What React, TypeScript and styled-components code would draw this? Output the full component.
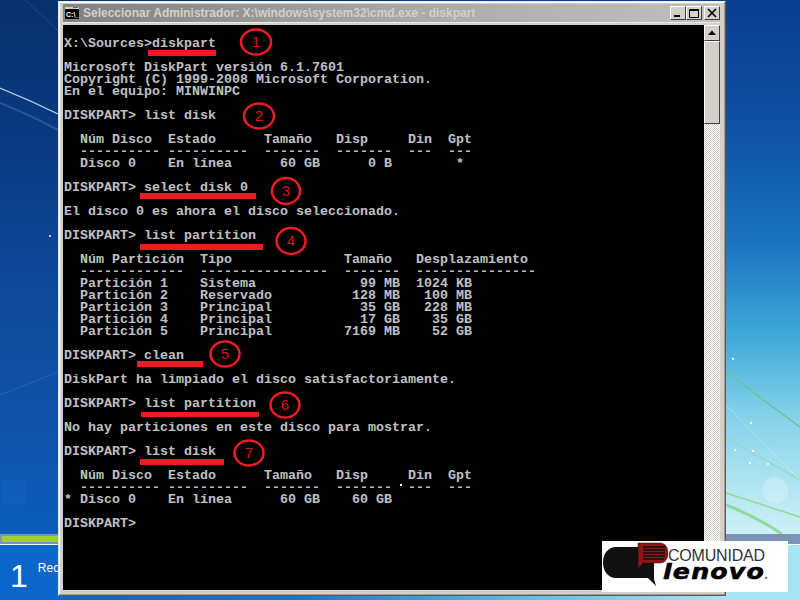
import React from "react";
import styled, { createGlobalStyle } from "styled-components";

const Global = createGlobalStyle`
  html, body { margin: 0; padding: 0; background: #0a5cb8; }
`;

const Desktop = styled.div`
  position: relative;
  width: 800px;
  height: 600px;
  overflow: hidden;
  display: flex;
  flex-direction: column;
  padding-top: 534px;
  box-sizing: border-box;
  background:
    linear-gradient(180deg, #07306c 0, #0a3a80 130px, #0f4a9c 300px, #0f54ae 450px, #0b5fbe 540px, #0a66c8 600px) left top / 400px 100% no-repeat,
    linear-gradient(180deg, #0a3f90 0, #0d4da2 110px, #1a72c0 240px, #3aa6d8 330px, #7fd0e8 410px, #b4e6f2 490px, #cdf0f7 534px, #a8e4f4 600px) right top / 400px 100% no-repeat;
`;

const Decor = styled.svg`
  position: absolute;
  inset: 0;
  width: 800px;
  height: 600px;
`;

const ProgressTrack = styled.div`
  position: relative;
  height: 11px;
  flex: none;
  box-sizing: border-box;
  background: #7a94b8;
  padding: 2px 0 2px 2px;
  border-bottom: 1px solid #ffffff;
`;

const ProgressFill = styled.div`
  width: 100px;
  height: 100%;
  background: #9bcf3a;
`;

const StatusRow = styled.div`
  position: relative;
  flex: 1;
  display: flex;
  align-items: flex-start;
  gap: 10px;
  padding: 13px 0 0 10px;
  color: #ffffff;
  font-family: "Liberation Sans", sans-serif;
  background: linear-gradient(90deg, #0a66c8 0, #0a66c8 80px, #1478cc 300px, #5cbce2 520px, #a8e4f4 726px);
`;

const StepNumber = styled.span`
  font-size: 32px;
  line-height: 36px;
`;

const StepLabel = styled.span`
  font-size: 12px;
  line-height: 16px;
  padding-top: 2px;
`;

const Win = styled.div`
  position: absolute;
  left: 58px;
  top: 1px;
  width: 668px;
  height: 595px;
  box-sizing: border-box;
  display: flex;
  flex-direction: column;
  background: #d4d0c8;
  padding: 2px 5px 5px 4px;
  border-top: 1px solid #efece4;
  border-left: 1px solid #e8e5dd;
  border-right: 1px solid #5a5a5a;
  border-bottom: 1px solid #5a5a5a;
  box-shadow: inset -1px -1px 0 #a09c94, inset 1px 1px 0 #ffffff;
`;

const TitleBar = styled.div`
  flex: none;
  height: 18px;
  display: flex;
  align-items: center;
  gap: 3px;
  padding: 0 0 0 1px;
  background: linear-gradient(90deg, #808080 0, #a8a8a8 50%, #c0c0c0 100%);
  border-bottom: 1px solid #efece4;
`;

const AppIcon = styled.svg`
  width: 16px;
  height: 14px;
  flex: none;
`;

const TitleText = styled.span`
  flex: 1;
  font-family: "Liberation Sans", sans-serif;
  font-weight: 700;
  font-size: 12px;
  line-height: 16px;
  color: #d4d0c8;
  white-space: nowrap;
`;

const CaptionButton = styled.div<{ $gap?: boolean }>`
  width: 16px;
  height: 14px;
  flex: none;
  margin-left: ${(p) => (p.$gap ? "2px" : "0")};
  box-sizing: border-box;
  background: #d4d0c8;
  border-top: 1px solid #ffffff;
  border-left: 1px solid #ffffff;
  border-right: 1px solid #404040;
  border-bottom: 1px solid #404040;
  display: flex;
  align-items: center;
  justify-content: center;
`;

const Glyph = styled.svg`
  width: 12px;
  height: 10px;
`;

const CaptionGroup = styled.div`
  display: flex;
  flex: none;
`;

const Body = styled.div`
  flex: 1;
  min-height: 0;
  display: flex;
  margin-top: 2px;
`;

const ConsoleArea = styled.div`
  position: relative;
  flex: 1;
  background: #000000;
  overflow: hidden;
  padding: 1px 0 0 1px;
`;

const ConsoleLine = styled.div`
  width: fit-content;
  height: 12px;
  font-family: "Liberation Mono", monospace;
  font-size: 13.333px;
  font-weight: 700;
  line-height: 12px;
  color: #c0c0c0;
  white-space: pre;
`;

const Marks = styled.svg`
  position: absolute;
  left: 0;
  top: 0;
  width: 641px;
  height: 566px;
`;

const MarkNumber = styled.text`
  font-family: "Liberation Sans", sans-serif;
  font-size: 15px;
  fill: #d8141c;
  text-anchor: middle;
`;

const ScrollBar = styled.div`
  flex: none;
  width: 16px;
  display: flex;
  flex-direction: column;
  background: repeating-conic-gradient(#d4d0c8 0 25%, #ffffff 0 50%) 0 0 / 2px 2px;
`;

const ScrollButton = styled.div`
  flex: none;
  height: 16px;
  box-sizing: border-box;
  background: #d4d0c8;
  border-top: 1px solid #ffffff;
  border-left: 1px solid #ffffff;
  border-right: 1px solid #404040;
  border-bottom: 1px solid #404040;
  display: flex;
  align-items: center;
  justify-content: center;
`;

const Thumb = styled.div`
  flex: none;
  height: 83px;
  box-sizing: border-box;
  background: #d4d0c8;
  border-top: 1px solid #ffffff;
  border-left: 1px solid #ffffff;
  border-right: 1px solid #404040;
  border-bottom: 1px solid #404040;
`;

const Track = styled.div`
  flex: 1;
`;

const Logo = styled.div`
  position: absolute;
  left: 602px;
  top: 541px;
  width: 186px;
  height: 51px;
  background: #ffffff;
  display: flex;
`;

const LogoMark = styled.svg`
  width: 66px;
  height: 51px;
  flex: none;
`;

const LogoWords = styled.div`
  display: flex;
  flex-direction: column;
  align-items: flex-start;
  padding-top: 7px;
`;

const Comunidad = styled.span`
  font-family: "Liberation Sans", sans-serif;
  font-size: 16px;
  line-height: 15px;
  letter-spacing: -0.2px;
  color: #333333;
`;

const Lenovo = styled.span`
  font-family: "DejaVu Sans", sans-serif;
  font-size: 21px;
  font-weight: 700;
  font-style: italic;
  line-height: 18px;
  letter-spacing: 1px;
  color: #000000;
  margin-left: -5px;
  -webkit-text-stroke: 0.6px #000;
  transform: scaleX(1.2);
  transform-origin: left center;
`;

const LogoDot = styled.span`
  font-size: 12px;
  letter-spacing: 0;
  color: #888888;
  -webkit-text-stroke: 0;
  margin-left: -1px;
`;

const consoleLines = `
X:\\Sources>diskpart

Microsoft DiskPart versión 6.1.7601
Copyright (C) 1999-2008 Microsoft Corporation.
En el equipo: MINWINPC

DISKPART> list disk

  Núm Disco  Estado      Tamaño   Disp     Din  Gpt
  ---------- ----------  -------  -------  ---  ---
  Disco 0    En línea      60 GB      0 B        *

DISKPART> select disk 0

El disco 0 es ahora el disco seleccionado.

DISKPART> list partition

  Núm Partición  Tipo              Tamaño   Desplazamiento
  -------------  ----------------  -------  ---------------
  Partición 1    Sistema             99 MB  1024 KB
  Partición 2    Reservado          128 MB   100 MB
  Partición 3    Principal           35 GB   228 MB
  Partición 4    Principal           17 GB    35 GB
  Partición 5    Principal         7169 MB    52 GB

DISKPART> clean

DiskPart ha limpiado el disco satisfactoriamente.

DISKPART> list partition

No hay particiones en este disco para mostrar.

DISKPART> list disk

  Núm Disco  Estado      Tamaño   Disp     Din  Gpt
  ---------- ----------  -------  -------  ---  ---
* Disco 0    En línea      60 GB    60 GB

DISKPART> `.split("\n");

// Coordinates in console space: page x - 63, page y - 24
const ox = 63;
const oy = 24;
const underlines = [
  { x: 148, y: 49, w: 68, h: 6 },
  { x: 140, y: 192, w: 116, h: 6 },
  { x: 140, y: 243, w: 123, h: 6 },
  { x: 137, y: 360, w: 66, h: 6 },
  { x: 141, y: 411, w: 118, h: 5 },
  { x: 140, y: 458, w: 84, h: 6 },
];
const circles = [
  { n: 1, x: 256, y: 41, rx: 15, ry: 12.5 },
  { n: 2, x: 259, y: 115, rx: 15, ry: 12.5 },
  { n: 3, x: 286, y: 190, rx: 14, ry: 13 },
  { n: 4, x: 291, y: 240, rx: 14.5, ry: 13 },
  { n: 5, x: 225, y: 353, rx: 14.5, ry: 12.5 },
  { n: 6, x: 285, y: 404, rx: 14.5, ry: 12.5 },
  { n: 7, x: 249, y: 452, rx: 14.5, ry: 12.5 },
];

export default function App() {
  return (
    <Desktop>
      <Global />
      <Decor viewBox="0 0 800 600">
        <path d="M0 88 Q30 100 58 114" stroke="#b8d0e4" strokeWidth="1.2" fill="none" />
        <path d="M0 103 Q30 115 58 130" stroke="#5f8fc0" strokeWidth="2" fill="none" opacity="0.35" />
        <path d="M25 0 L58 30" stroke="#3a6aa8" strokeWidth="1" fill="none" opacity="0.4" />
        <path d="M0 395 L58 372" stroke="#4a80c0" strokeWidth="1" fill="none" opacity="0.4" />
        <circle cx="50" cy="236" r="1" fill="#ffffff" />
        <rect x="2" y="480" width="24" height="25" fill="#1a70cc" opacity="0.25" />
        <path d="M726 372 L800 427" stroke="#6cc48c" strokeWidth="1.4" fill="none" />
        <path d="M726 438 L800 480" stroke="#90dcb4" strokeWidth="1.2" fill="none" />
        <path d="M726 493 L800 517" stroke="#8edc90" strokeWidth="1.5" fill="none" />
        <path d="M726 505 Q755 516 782 534" stroke="#8edca0" strokeWidth="3" fill="none" />
        <path d="M726 405 L800 480" stroke="#e0f8fc" strokeWidth="0.8" fill="none" opacity="0.5" />
        <circle cx="775" cy="490" r="13" fill="#ffffff" opacity="0.22" />
        <circle cx="733" cy="359" r="1.2" fill="#ffffff" />
        <circle cx="751" cy="423" r="1.2" fill="#ffffff" />
        <circle cx="753" cy="451" r="1.2" fill="#ffffff" />
        <circle cx="750" cy="463" r="1.2" fill="#ffffff" />
        <circle cx="768" cy="464" r="1" fill="#ffffff" />
        <circle cx="735" cy="450" r="1" fill="#ffffff" />
      </Decor>
      <ProgressTrack>
        <ProgressFill />
      </ProgressTrack>
      <StatusRow>
        <StepNumber>1</StepNumber>
        <StepLabel>Recopilando información</StepLabel>
      </StatusRow>
      <Win>
        <TitleBar>
          <AppIcon viewBox="0 0 16 14">
            <rect x="0.5" y="0.5" width="15" height="13" fill="#d4d0c8" stroke="#8a8a8a" />
            <rect x="1" y="3" width="14" height="10" fill="#000000" />
            <rect x="9" y="1" width="5" height="1" fill="#3a6ea5" />
            <text x="2" y="11" fontFamily="Liberation Sans" fontSize="7" fontWeight="700" fill="#ffffff">C:\_</text>
          </AppIcon>
          <TitleText>Seleccionar Administrador: X:\windows\system32\cmd.exe - diskpart</TitleText>
          <CaptionGroup>
            <CaptionButton>
              <Glyph viewBox="0 0 12 10"><rect x="2" y="7" width="6" height="2" fill="#000" /></Glyph>
            </CaptionButton>
            <CaptionButton>
              <Glyph viewBox="0 0 12 10"><path d="M1.5 1.5h9v8h-9z" fill="none" stroke="#000" strokeWidth="1" /><rect x="1" y="1" width="10" height="2" fill="#000" /></Glyph>
            </CaptionButton>
            <CaptionButton $gap>
              <Glyph viewBox="0 0 12 10"><path d="M2 1l8 8M10 1l-8 8" stroke="#000" strokeWidth="1.6" fill="none" /></Glyph>
            </CaptionButton>
          </CaptionGroup>
        </TitleBar>
        <Body>
          <ConsoleArea>
            {consoleLines.map((line, i) => (
              <ConsoleLine key={i}>{line}</ConsoleLine>
            ))}
            <Marks viewBox="0 0 641 566">
              {underlines.map((u) => (
                <rect key={u.y} x={u.x - ox} y={u.y - oy} width={u.w} height={u.h} fill="#ed1c24" />
              ))}
              {circles.map((c) => (
                <g key={c.n}>
                  <ellipse cx={c.x - ox} cy={c.y - oy} rx={c.rx} ry={c.ry} fill="none" stroke="#ed1c24" strokeWidth="2.5" />
                  <MarkNumber x={c.x - ox} y={c.y - oy + 5}>{c.n}</MarkNumber>
                </g>
              ))}
              <rect x={400 - ox} y={483 - oy} width="2" height="2" fill="#ffffff" />
            </Marks>
          </ConsoleArea>
          <ScrollBar>
            <ScrollButton>
              <Glyph viewBox="0 0 12 10"><path d="M6 2.5L10 7H2z" fill="#000" /></Glyph>
            </ScrollButton>
            <Thumb />
            <Track />
            <ScrollButton>
              <Glyph viewBox="0 0 12 10"><path d="M6 7.5L10 3H2z" fill="#000" /></Glyph>
            </ScrollButton>
          </ScrollBar>
        </Body>
      </Win>
      <Logo>
        <LogoMark viewBox="0 0 66 51">
          <path d="M14 6H52V38L54 45L46 37H14C6 37 1 30 1 21.5C1 13 6 6 14 6Z" fill="#111111" />
          <path d="M36 2H58C63 2 66 6 66 12C66 18 63 22 58 22H41L36 28Z" fill="#8f1414" stroke="#111" strokeWidth="0.5" />
          <path d="M41 6H63M41 9H63M41 12H63M41 15H63M41 18H62" stroke="#111111" strokeWidth="1.3" />
        </LogoMark>
        <LogoWords>
          <Comunidad>COMUNIDAD</Comunidad>
          <Lenovo>lenovo<LogoDot>.</LogoDot></Lenovo>
        </LogoWords>
      </Logo>
    </Desktop>
  );
}
